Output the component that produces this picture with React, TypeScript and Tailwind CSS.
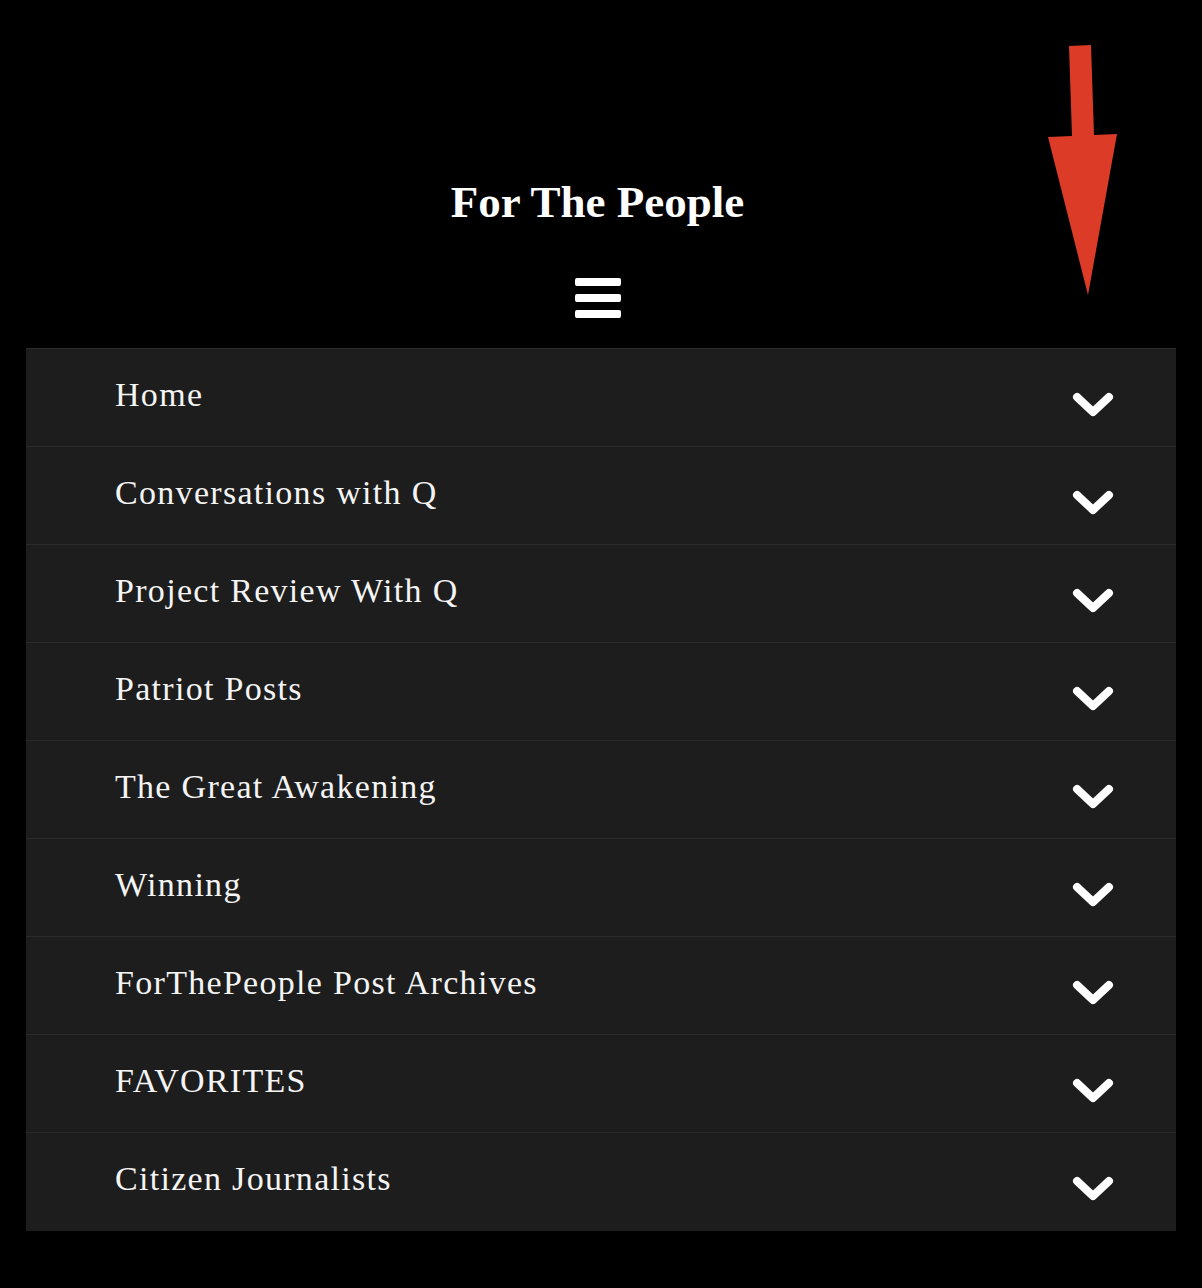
import React from "react";

const items = [
  "Home",
  "Conversations with Q",
  "Project Review With Q",
  "Patriot Posts",
  "The Great Awakening",
  "Winning",
  "ForThePeople Post Archives",
  "FAVORITES",
  "Citizen Journalists",
];

function Chevron() {
  return (
    <svg width="42" height="26" viewBox="0 0 42 26" className="block mt-[14px]">
      <path d="M5 5 L21 20 L37 5" fill="none" stroke="#ffffff" strokeWidth="8" strokeLinecap="round" strokeLinejoin="round" />
    </svg>
  );
}

export default function App() {
  return (
    <div className="relative w-[1202px] h-[1288px] bg-black overflow-hidden">
      <svg className="absolute left-[1040px] top-[40px]" width="90" height="265" viewBox="1040 40 90 265">
        <polygon points="1069,46 1091,45 1094,135 1117,134 1088,295 1048,137 1072,136" fill="#DC3B27" />
      </svg>
      <div className="flex flex-col items-center pt-[176px] pr-[7px]">
        <h1 className="text-white text-[45px] leading-[52px] font-bold" style={{ fontFamily: '"Liberation Serif", serif' }}>
          For The People
        </h1>
        <div className="mt-[50px] flex flex-col gap-[8px] w-[46px]">
          <div className="h-[8px] bg-white rounded-[2px]" />
          <div className="h-[8px] bg-white rounded-[2px]" />
          <div className="h-[8px] bg-white rounded-[2px]" />
        </div>
      </div>
      <div className="mx-[26px] mt-[30px] bg-[#1d1d1d] border-t border-[#2b2b2b]">
        {items.map((t, i) => (
          <div
            key={t}
            className={
              "h-[98px] flex items-center justify-between pl-[89px] pr-[62px] " +
              (i < items.length - 1 ? "border-b border-[#2a2a2a]" : "")
            }
          >
            <span
              className="text-[#f4f4f4] text-[34px] leading-none -mt-[6px] tracking-[1.3px]"
              style={{ fontFamily: '"Liberation Serif", serif' }}
            >
              {t}
            </span>
            <Chevron />
          </div>
        ))}
      </div>
    </div>
  );
}
